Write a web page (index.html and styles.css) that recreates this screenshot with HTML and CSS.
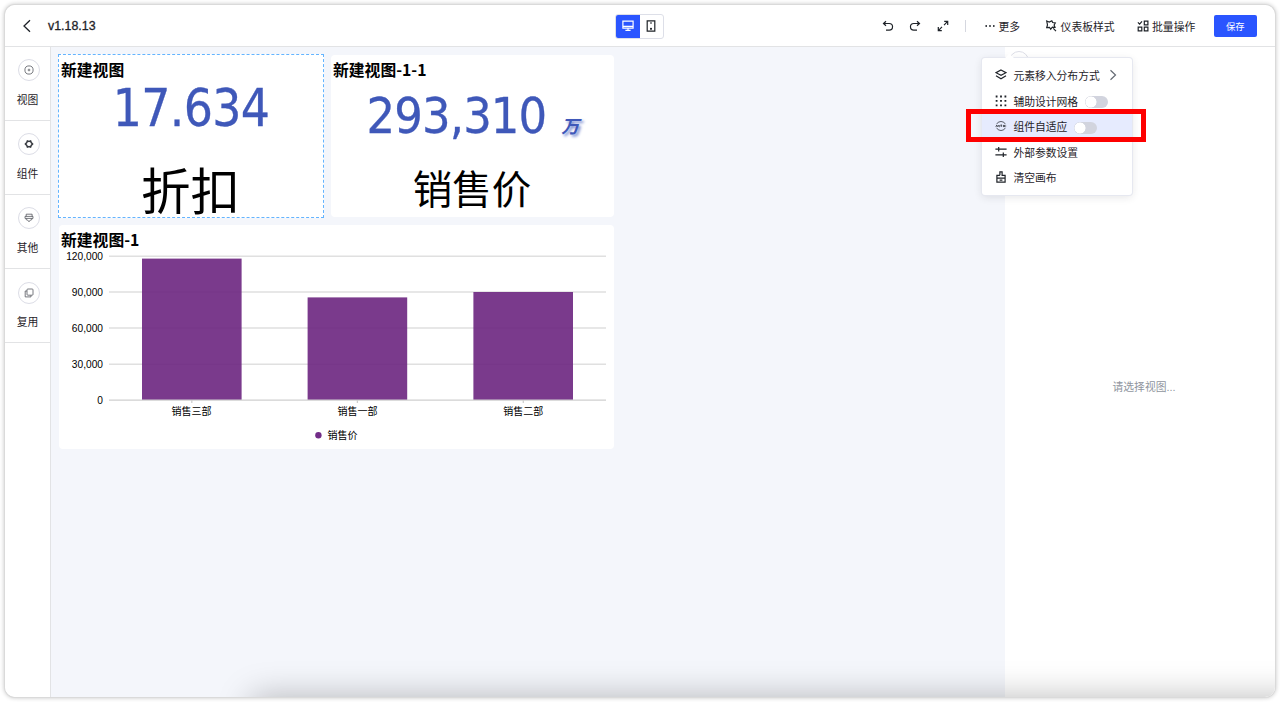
FILE: index.html
```html
<!DOCTYPE html>
<html lang="zh-CN">
<head>
<meta charset="utf-8">
<title>v1.18.13</title>
<link rel="stylesheet" href="styles.css">
</head>
<body>
<div class="window">
  <header class="topbar">
    <div class="topbar-left">
      <svg class="back" width="10" height="14" viewBox="0 0 10 14"><path d="M8 1.2 2 7l6 5.8"/></svg>
      <span class="version">v1.18.13</span>
    </div>
    <div class="devices">
      <div class="device active">
        <svg width="12" height="12" viewBox="0 0 12 12"><path d="M.9 1.2h10.2v7H.9zM1 6.4h10M3.4 10.3h5.2M6 8.2v2.1"/></svg>
      </div>
      <div class="device">
        <svg width="12" height="12" viewBox="0 0 12 12"><path d="M2.2.9h7.6v10.2H2.2zM5 3h2"/><circle cx="6" cy="8.8" r=".5"/></svg>
      </div>
    </div>
    <div class="tools">
      <svg class="tool-icon" width="12" height="12" viewBox="0 0 12 12"><path d="M4 1.2 1.5 3.5 4 5.8M1.6 3.5h5.6a3.3 3.3 0 0 1 0 6.7H4"/></svg>
      <svg class="tool-icon" width="12" height="12" viewBox="0 0 12 12"><path d="m8 1.2 2.5 2.3L8 5.8M10.4 3.5H4.8a3.3 3.3 0 0 0 0 6.7H8"/></svg>
      <svg class="tool-icon" width="12" height="12" viewBox="0 0 12 12"><path d="M7.2 1.4h3.5v3.5M10.4 1.7 7 5.1M1.3 7.1v3.5h3.5M1.6 10.3 5 6.9"/></svg>
      <span class="divider"></span>
      <div class="tool more">
        <svg width="10" height="12" viewBox="0 0 10 12"><g class="solid"><circle cx="1.2" cy="6" r=".9"/><circle cx="5" cy="6" r=".9"/><circle cx="8.8" cy="6" r=".9"/></g></svg>
        <span>更多</span>
      </div>
      <div class="tool style">
        <svg width="12" height="12" viewBox="0 0 12 12"><path d="M1.7 1 4.3 2 6.8.8l.9 1.7 2.6.5-1.2 2 .9 2.4-2.6-.2-1.7 2-1.2-1.9-2.8.3.8-2.7zM8.3 8.4l2.7 2.7"/></svg>
        <span>仪表板样式</span>
      </div>
      <div class="tool batch">
        <svg width="12" height="12" viewBox="0 0 12 12"><path d="m.9 2.4 1.7 1.7L5 1.3M7.3 1.2h3.6v3.6H7.3zM1.2 7.1h3.6v3.7H1.2zM7.3 7.1h3.6v3.7H7.3z"/></svg>
        <span>批量操作</span>
      </div>
      <button class="save">保存</button>
    </div>
  </header>
  <div class="body">
    <nav class="sidebar">
      <div class="side-item">
        <span class="ring"><svg width="10" height="10" viewBox="0 0 10 10"><circle cx="5" cy="5" r="4.1"/><path d="M5 3.7v2.6M3.7 5h2.6"/></svg></span>
        <span>视图</span>
      </div>
      <div class="side-item">
        <span class="ring"><svg class="dark" width="10" height="10" viewBox="0 0 10 10"><path d="m3.4 1.9 1.6.5 1.6-.5.6 1.6L8.6 5 7.2 6.5l-.6 1.6L5 7.6l-1.6.5-.6-1.6L1.4 5l1.4-1.5z"/></svg></span>
        <span>组件</span>
      </div>
      <div class="side-item">
        <span class="ring"><svg width="10" height="10" viewBox="0 0 10 10"><path d="M2.2 3.4V1.2h5.9v2.2M1 3.4v2h8v-2zM2.2 5.5v1.2l1.5.4L5 8.8l1.3-1.7 1.5-.4V5.5"/></svg></span>
        <span>其他</span>
      </div>
      <div class="side-item">
        <span class="ring"><svg width="10" height="10" viewBox="0 0 10 10"><rect x="3" y="1" width="6" height="6.2" rx=".8"/><path d="M3 3H1.2v5.9H7V7.3"/></svg></span>
        <span>复用</span>
      </div>
    </nav>
    <main class="canvas">
      <div class="card-row">
        <section class="card selected">
          <h2>新建视图</h2>
          <p class="figure">17.634</p>
          <p class="caption large">折扣</p>
        </section>
        <section class="card">
          <h2>新建视图-1-1</h2>
          <p class="figure with-unit">293,310<span class="unit">万</span></p>
          <p class="caption">销售价</p>
        </section>
      </div>
      <section class="card chart-card">
        <h2>新建视图-1</h2>
        <svg class="chart" width="555" height="200" viewBox="59 249 555 200">
          <g class="grid"><path d="M109 256.3h497M109 292h497M109 328h497M109 364.2h497"/></g>
          <g class="bars">
            <rect x="142" y="258.6" width="99.6" height="141.4"/>
            <rect x="307.6" y="297.4" width="99.6" height="102.6"/>
            <rect x="473.4" y="292" width="99.6" height="108"/>
          </g>
          <path class="axis" d="M109 400.2h497M191.8 400v3M357.4 400v3M523.3 400v3"/>
          <g class="y-labels">
            <text x="103" y="259.8">120,000</text>
            <text x="103" y="295.6">90,000</text>
            <text x="103" y="331.6">60,000</text>
            <text x="103" y="367.8">30,000</text>
            <text x="103" y="403.6">0</text>
          </g>
          <g class="x-labels">
            <text x="191.6" y="415">销售三部</text>
            <text x="357.4" y="415">销售一部</text>
            <text x="523.3" y="415">销售二部</text>
            <text x="342.6" y="439">销售价</text>
          </g>
          <circle class="legend-dot" cx="318.4" cy="435.2" r="3.2"/>
        </svg>
      </section>
    </main>
    <aside class="panel">
      <span class="panel-toggle"></span>
      <p>请选择视图...</p>
    </aside>
  </div>
  <div class="bottom-shade"></div>
</div>

<div class="menu">
  <div class="menu-item">
    <svg width="12" height="12" viewBox="0 0 12 12"><path d="m6 1 5 2.7-5 2.7-5-2.7zM1 6.8l5 2.9 5-2.9"/></svg>
    <span>元素移入分布方式</span>
    <svg class="chevron" width="8" height="12" viewBox="0 0 8 12"><path d="m1.5 1.2 5 4.8-5 4.8"/></svg>
  </div>
  <div class="menu-item">
    <svg width="12" height="12" viewBox="0 0 12 12"><g class="solid"><path d="M.7.6h1.8v1.8H.7zM5.1.6h1.8v1.8H5.1zM9.5.6h1.8v1.8H9.5zM.7 5h1.8v1.8H.7zM5.1 5h1.8v1.8H5.1zM9.5 5h1.8v1.8H9.5zM.7 9.4h1.8v1.8H.7zM5.1 9.4h1.8v1.8H5.1zM9.5 9.4h1.8v1.8H9.5z"/></g></svg>
    <span>辅助设计网格</span>
    <i class="switch"></i>
  </div>
  <div class="menu-item hover">
    <svg class="thin" width="12" height="12" viewBox="0 0 12 12"><path d="M1.6 4.2a4.7 4.2 0 0 1 8.8 0M1.6 7.8a4.7 4.2 0 0 0 8.8 0M.8 7l1-2 .8 2M3.6 5v1.4q.6 1 1.2 0V5M5.5 5h1.6M6.3 5v2M8.2 6h3"/><circle cx="9" cy="6" r=".8"/></svg>
    <span>组件自适应</span>
    <i class="switch"></i>
  </div>
  <div class="menu-item">
    <svg width="12" height="12" viewBox="0 0 12 12"><path d="M.4 3.2h11.2M3.7 1v4.4M.4 8.8h11.2M8.3 6.6V11"/></svg>
    <span>外部参数设置</span>
  </div>
  <div class="menu-item">
    <svg width="12" height="12" viewBox="0 0 12 12"><path d="M4.9 4.3V.9h2.2v3.4h3v2.9H1.9V4.3h3M1.9 7.2v3.9h8.2V7.2M4.6 9.1h2.8"/></svg>
    <span>清空画布</span>
  </div>
</div>
<div class="highlight-frame"></div>
</body>
</html>
```

FILE: styles.css
```css
* { box-sizing: border-box; }

body {
  margin: 0;
  height: 702px;
  padding: 5px;
  overflow: hidden;
  background: #fff;
  color: #1f2329;
  font-family: "Liberation Sans", "Noto Sans CJK SC", sans-serif;
  font-size: 10.8px;
}

h2, p { margin: 0; }

svg { display: block; flex: none; fill: none; stroke: #1f2329; stroke-width: 1.2; }
.solid { fill: #1f2329; stroke: none; }

.window {
  position: relative;
  display: flex;
  flex-direction: column;
  width: 1270px;
  height: 692px;
  overflow: hidden;
  border-radius: 10px;
  background: #fff;
}

/* frame and soft edge around the window */
body::before {
  content: "";
  position: absolute;
  inset: 5px;
  height: 692px;
  border-radius: 10px;
  box-shadow: 0 0 0 1px #dadada, 0 0 4px 1px #c8c8c8;
}

.topbar {
  display: flex;
  align-items: center;
  flex: none;
  height: 42px;
  border-bottom: 1px solid #e2e3e5;
}

.topbar-left { display: flex; align-items: center; width: 610px; padding-left: 17px; gap: 16px; }
.back { stroke-width: 1.3; }
.version { font-size: 12.4px; -webkit-text-stroke: .3px #1f2329; }

.devices {
  display: flex;
  width: 49px;
  height: 25px;
  margin-top: 1px;
  border: 1px solid #dddfe8;
  border-radius: 3px;
  overflow: hidden;
}
.device { display: flex; align-items: center; justify-content: center; width: 22px; }
.device.active { width: 25px; margin: -1px 0 -1px -1px; background: #2a55ff; }
.device.active svg { stroke: #fff; }

.tools { display: flex; align-items: center; flex: 1; padding-left: 218px; }
.tool-icon { margin-right: 15px; }
.tool-icon + .tool-icon { margin-right: 16px; }
.divider { width: 1px; height: 12px; margin-left: 0; background: #d5d7df; }
.tool { display: flex; align-items: center; gap: 3.5px; white-space: nowrap; }
.more { margin-left: 19px; }
.style { margin-left: 25px; }
.batch { margin-left: 22px; }

.save {
  width: 43px;
  height: 22px;
  margin: 1px 0 0 18.5px;
  padding: 0;
  border: 0;
  border-radius: 2px;
  background: #2a55ff;
  color: #fff;
  font: 9.3px "Noto Sans CJK SC", sans-serif;
}

.body { display: flex; flex: 1; }

.sidebar { width: 46px; border-right: 1px solid #e2e3e5; }
.side-item {
  display: flex;
  flex-direction: column;
  align-items: center;
  height: 74.1px;
  padding-top: 12.3px;
  border-bottom: 1px solid #e2e3e5;
  line-height: 16px;
}
.ring {
  display: flex;
  align-items: center;
  justify-content: center;
  width: 22px;
  height: 22px;
  margin: 0 0 10.5px 3px;
  border: 1px solid #dcdde6;
  border-radius: 50%;
}
.ring svg { stroke: #55585f; stroke-width: .8; }
.ring svg.dark { stroke: #373a40; stroke-width: 1.5; }

.canvas { width: 954px; padding: 7px; background: #f4f6fb; }
.card-row { display: flex; gap: 7px; }

.card {
  width: 283px;
  height: 162px;
  margin-top: 1px;
  padding-left: 2px;
  border-radius: 4px;
  background: #fff;
  color: #000;
  text-align: center;
}
.card.selected {
  width: 266px;
  height: 164px;
  margin-top: 0;
  border: 1px dashed #64b4ff;
  border-radius: 0;
}
.card h2 {
  height: 24px;
  padding-top: 3px;
  font: bold 15.8px/24px "Noto Sans CJK SC", sans-serif;
  text-align: left;
}

.figure {
  height: 60px;
  padding-top: 3px;
  color: #3f58b9;
  font: 51px/54px "DejaVu Sans Condensed", "DejaVu Sans", sans-serif;
  font-stretch: condensed;
  letter-spacing: -.7px;
  -webkit-text-stroke: .3px #3f58b9;
}
.selected .figure { padding-right: 2px; }
.figure.with-unit { padding: 10px 2px 0 0; font-size: 50px; letter-spacing: -.9px; }
.unit {
  margin-left: 15px;
  font: italic bold 18px "Noto Sans CJK SC", sans-serif;
  text-shadow: 2px 2px 3px #6f82cc;
  -webkit-text-stroke: 0;
}
.caption { padding: 18px 3px 0 0; font: 39.5px/60px "Noto Sans CJK SC", sans-serif; }
.caption.large { padding-top: 20px; font-size: 49.5px; }

.card.chart-card { width: 555px; height: 224px; margin: 7px 0 0 1px; padding: 0; }
.chart-card h2 { padding-left: 2px; }

.grid { stroke: #e0e0e0; stroke-width: 1.6; }
.bars { fill: #6b2580; fill-opacity: .9; stroke: none; }
.axis { stroke: #cfcfcf; stroke-width: 1.3; }
.y-labels, .x-labels { fill: #000; stroke: none; font-size: 10px; }
.y-labels { text-anchor: end; font-size: 10.2px; }
.x-labels { text-anchor: middle; }
.legend-dot { fill: #722d88; stroke: none; }

.panel { width: 270px; padding: 5px; background: #fff; color: #8f959e; text-align: center; }
.panel-toggle { display: block; width: 20px; height: 20px; margin: -1px 0 1px -1px; border: 1px solid #dcdde6; border-radius: 50%; }
.panel p { padding: 307px 0 0 8px; line-height: 16px; }

/* shade rising from the bottom edge */
.bottom-shade {
  position: absolute;
  left: 251px;
  right: -60px;
  top: 700px;
  height: 30px;
  box-shadow: 0 -4px 34px 4px rgba(0, 0, 0, .27);
}

.menu {
  position: absolute;
  left: 982px;
  top: 58px;
  width: 150px;
  height: 137px;
  padding-top: 4.5px;
  border-radius: 3px;
  background: #fff;
  box-shadow: 0 0 0 1px #e6e8f0, 0 2px 8px rgba(31, 35, 41, .12);
}
.menu::before {
  content: "";
  position: absolute;
  left: 24px;
  top: -3px;
  width: 7px;
  height: 7px;
  background: #fff;
  transform: rotate(45deg);
}
.menu-item { display: flex; align-items: center; height: 25.5px; padding-left: 13px; gap: 6.4px; white-space: nowrap; }
.menu-item.hover { background: #e6ebfe; }
.menu-item .chevron { margin-left: 3px; stroke: #646a73; }
.menu-item .thin { stroke-width: .7; }
.switch {
  width: 23px;
  height: 12px;
  margin-top: 3px;
  border-radius: 6px;
  background: radial-gradient(circle at 6px 6px, #fff 5.2px, #d2d4de 5.8px);
}

.highlight-frame {
  position: absolute;
  left: 966px;
  top: 109px;
  width: 180px;
  height: 33px;
  border: 5px solid #fe0000;
}
```
